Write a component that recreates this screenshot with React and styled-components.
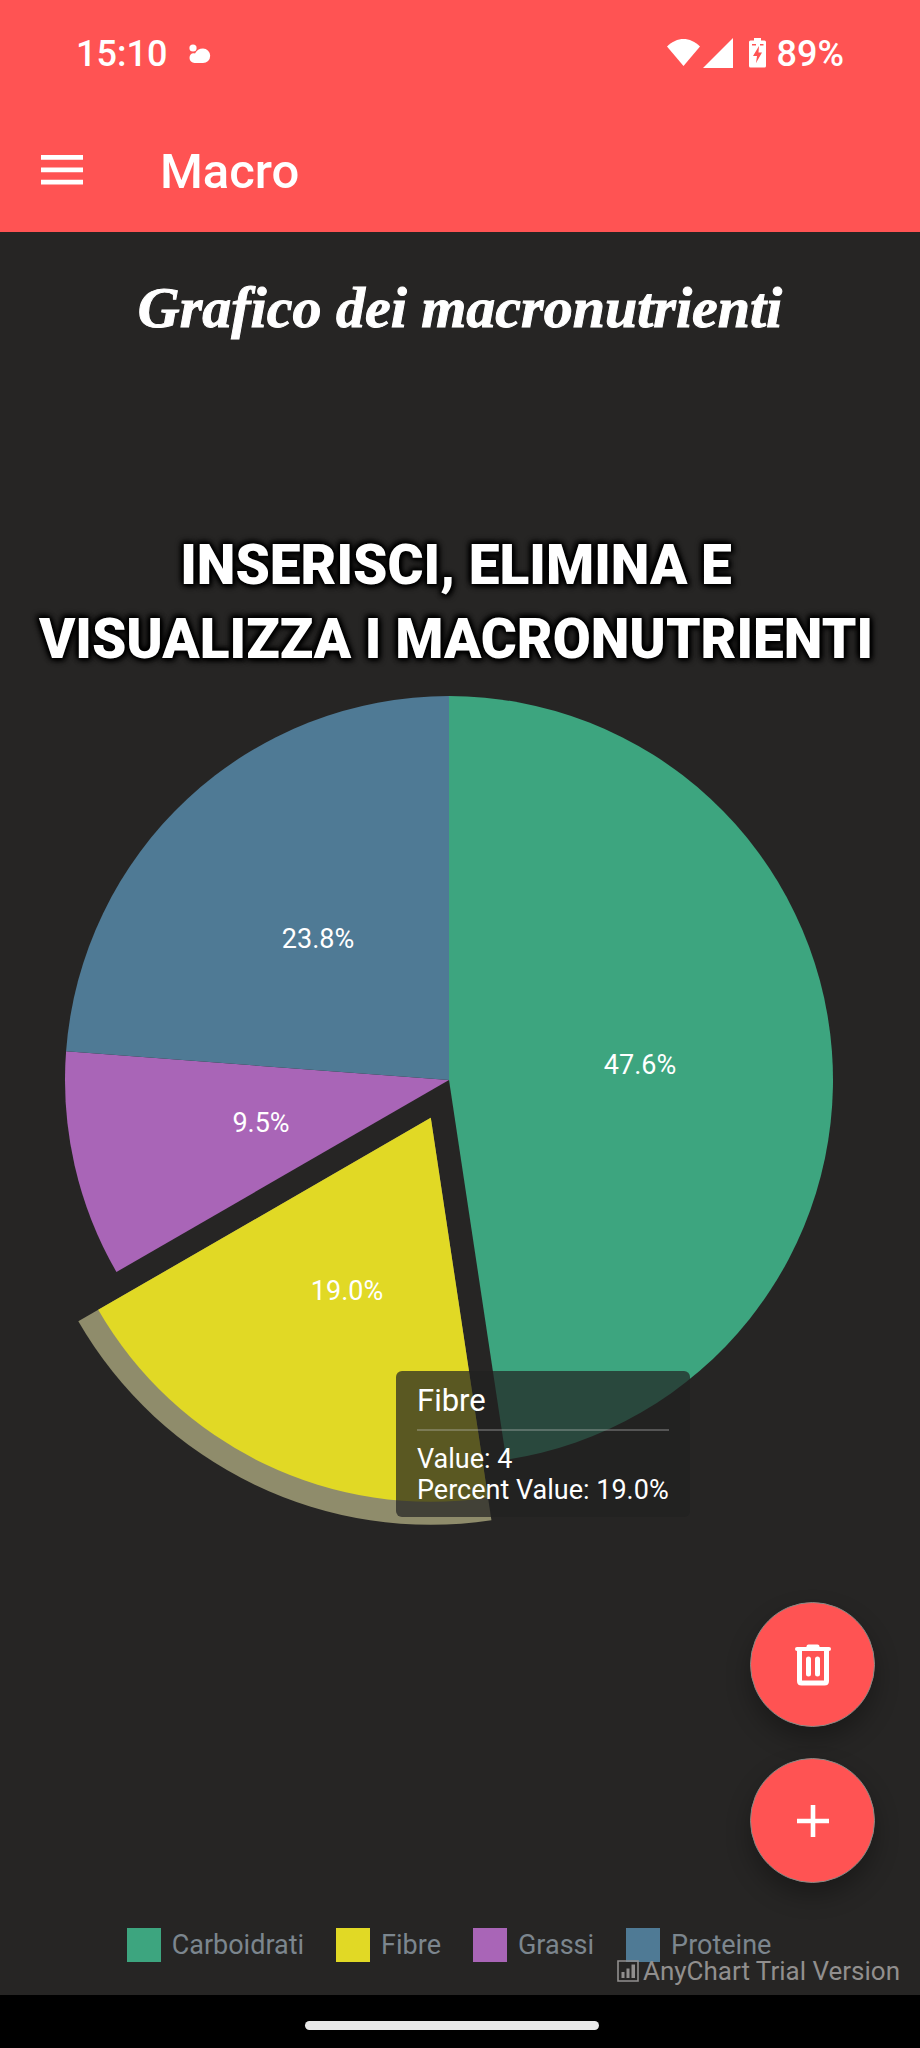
import React from "react";
import styled, { createGlobalStyle } from "styled-components";

const GlobalStyle = createGlobalStyle`
  * { box-sizing: border-box; }
  body {
    margin: 0;
    background: #262524;
    color: #ffffff;
    font-family: Roboto, "Liberation Sans", sans-serif;
  }
`;

const Screen = styled.div`
  display: flex;
  flex-direction: column;
  min-height: 100vh;
`;

const Header = styled.header`
  background: #ff5353;
`;

const StatusBar = styled.div`
  display: flex;
  align-items: center;
  justify-content: space-between;
  height: 108px;
  padding: 0 76px;
  font-size: 36px;
  line-height: 44px;
  font-weight: 500;
`;

const StatusGroup = styled.div`
  display: flex;
  align-items: center;
  gap: ${(p) => p.$gap}px;
`;

const Signals = styled.svg`
  display: block;
`;

const AppBar = styled.div`
  display: flex;
  align-items: center;
  gap: 74px;
  height: 124px;
  padding: 0 38px;
`;

const MenuButton = styled.button`
  display: grid;
  place-items: center;
  width: 48px;
  height: 48px;
  padding: 0;
  border: 0;
  background: none;
  color: inherit;
`;

const AppTitle = styled.h1`
  margin: 0;
  padding-top: 4px;
  font-size: 49px;
  line-height: 56px;
  font-weight: 500;
`;

const Main = styled.main`
  position: relative;
  flex: 1;
  display: flex;
  flex-direction: column;
`;

const ChartTitle = styled.h2`
  margin: 36px 0 0;
  font-family: "Liberation Serif", serif;
  font-style: italic;
  font-weight: 700;
  font-size: 58px;
  line-height: 80px;
  text-align: center;
  -webkit-text-stroke: 1px #ffffff;
`;

const Banner = styled.p`
  margin: 180px 8px 0 0;
  font-weight: 900;
  font-size: 55px;
  line-height: 74px;
  text-align: center;
  text-transform: uppercase;
  text-shadow: 0 0 4px #000, 0 0 5px #000, 0 0 6px #000, 2px 2px 6px #000, -2px -2px 6px #000;
`;

const BannerLine = styled.span`
  display: block;
`;

const Chart = styled.figure`
  position: relative;
  margin: 20px 22px 0 0;
`;

const Pie = styled.svg`
  display: block;
  width: 100%;
  height: auto;
`;

const SliceLabel = styled.text`
  fill: #ffffff;
  font-size: 27px;
  text-anchor: middle;
`;

const Tooltip = styled.div`
  position: absolute;
  left: 396px;
  top: 675px;
  padding: 12px 21px 11px;
  border-radius: 6px;
  background: rgba(33, 33, 33, 0.7);
  font-size: 27px;
  line-height: 31px;
  white-space: nowrap;
`;

const TooltipTitle = styled.div`
  padding-bottom: 10px;
  margin-bottom: 13px;
  border-bottom: 2px solid rgba(206, 206, 206, 0.3);
  font-size: 31px;
  line-height: 36px;
`;

const Actions = styled.div`
  display: flex;
  flex-direction: column;
  align-items: flex-end;
  gap: 31px;
  margin-top: 74px;
  padding-right: 45px;
`;

const ActionButton = styled.button`
  display: grid;
  place-items: center;
  width: 125px;
  height: 125px;
  padding: 0;
  border: 1px solid #8a8a86;
  border-radius: 50%;
  background: #ff5353;
  color: #ffffff;
  box-shadow: 0 12px 24px rgba(0, 0, 0, 0.3);
`;

const Legend = styled.ul`
  display: flex;
  justify-content: center;
  gap: 32px;
  margin: 45px 22px 32px 0;
  padding: 0;
  list-style: none;
`;

const LegendItem = styled.li`
  display: flex;
  align-items: center;
  gap: 11px;
  color: #7c868e;
  font-size: 27px;
  line-height: 26px;
`;

const Swatch = styled.span`
  width: 34px;
  height: 34px;
  background: ${(p) => p.$color};
`;

const Credit = styled.div`
  position: absolute;
  right: 20px;
  bottom: 11px;
  display: flex;
  align-items: center;
  gap: 4px;
  color: #918f8e;
  font-size: 26px;
  line-height: 26px;
`;

const GestureBar = styled.footer`
  display: flex;
  justify-content: center;
  align-items: center;
  height: 53px;
  padding-top: 8px;
  background: #000000;
`;

const Pill = styled.div`
  width: 32%;
  height: 9px;
  margin-right: 16px;
  border-radius: 5px;
  background: #e9e9e9;
`;

const CX = 449;
const CY = 384;
const R = 384;

const SLICES = [
  { name: "Carboidrati", value: 10, color: "#3da57f", label: [640, 378] },
  { name: "Fibre", value: 4, color: "#e1d925", label: [347, 604], exploded: true },
  { name: "Grassi", value: 2, color: "#a965b7", label: [261, 436] },
  { name: "Proteine", value: 5, color: "#4f7a95", label: [318, 252] },
];
const TOTAL = SLICES.reduce((sum, s) => sum + s.value, 0);

const point = (cx, cy, r, turn) => {
  const a = turn * 2 * Math.PI;
  return `${cx + r * Math.sin(a)} ${cy - r * Math.cos(a)}`;
};
const sector = (cx, cy, r, from, to) =>
  `M${cx} ${cy}L${point(cx, cy, r, from)}A${r} ${r} 0 0 1 ${point(cx, cy, r, to)}Z`;

function PieSlices() {
  let start = 0;
  return SLICES.map((s) => {
    const from = start;
    const to = from + s.value / TOTAL;
    start = to;
    const mid = (from + to) * Math.PI;
    const shift = s.exploded ? 42 : 0;
    const cx = CX + shift * Math.sin(mid);
    const cy = CY - shift * Math.cos(mid);
    return (
      <g key={s.name}>
        {s.exploded && <path d={sector(cx, cy, R + 23, from, to)} fill="#8f8c6b" />}
        <path d={sector(cx, cy, R, from, to)} fill={s.color} />
        <SliceLabel x={s.label[0]} y={s.label[1]}>
          {((s.value / TOTAL) * 100).toFixed(1)}%
        </SliceLabel>
      </g>
    );
  });
}

export default function App() {
  return (
    <Screen>
      <GlobalStyle />
      <Header>
        <StatusBar>
          <StatusGroup $gap={22}>
            <span>15:10</span>
            <svg width="22" height="20" viewBox="0 0 22 20" fill="#fff" aria-hidden="true">
              <circle cx="4" cy="4" r="3.6" />
              <path d="M5.5 19A5.2 5.2 0 0 1 .5 14C.5 10 3.4 8.6 6 9.6 7.400 6.500 10.400 4.600 14 4.600A7.200 7.200 0 0 1 14 19Z" />
            </svg>
          </StatusGroup>
          <StatusGroup $gap={10}>
            <Signals width="100" height="32" viewBox="0 0 100 32" fill="#fff" aria-hidden="true">
              <path d="M0 8.500C10 -1.500 23 -1.500 33 8.500L16.500 28Z" />
              <path d="M66 0V30H36Z" />
              <path
                fillRule="evenodd"
                d="M87 0H94V2.500H97.500Q99 2.500 99 4V28Q99 29.500 97.500 29.500H83.500Q82 29.500 82 28V4Q82 2.500 83.500 2.500H87ZM85 6V7.500H89V6ZM93 6V7.500H96.500V6ZM92 8L86 18H90L89 25L95 14.500H91.500Z"
              />
            </Signals>
            <span>89%</span>
          </StatusGroup>
        </StatusBar>
        <AppBar>
          <MenuButton type="button" aria-label="Menu">
            <svg width="42" height="30" viewBox="0 0 42 30" fill="currentColor" aria-hidden="true">
              <path d="M0 0H42V4.800H0ZM0 12.400H42V17.200H0ZM0 24.800H42V29.600H0Z" />
            </svg>
          </MenuButton>
          <AppTitle>Macro</AppTitle>
        </AppBar>
      </Header>

      <Main>
        <ChartTitle>Grafico dei macronutrienti</ChartTitle>
        <Banner>
          <BannerLine>Inserisci, elimina e</BannerLine>
          <BannerLine>visualizza i macronutrienti</BannerLine>
        </Banner>

        <Chart>
          <Pie viewBox="0 0 898 832" role="img" aria-label="Grafico dei macronutrienti">
            <PieSlices />
          </Pie>
          <Tooltip role="tooltip">
            <TooltipTitle>Fibre</TooltipTitle>
            <div>Value: 4</div>
            <div>Percent Value: 19.0%</div>
          </Tooltip>
        </Chart>

        <Actions>
          <ActionButton type="button" aria-label="Elimina">
            <svg width="36" height="42" viewBox="0 0 36 42" fill="none" stroke="currentColor" strokeLinecap="round" strokeLinejoin="round" aria-hidden="true">
              <path d="M2 5H34" strokeWidth="4" />
              <path d="M13.500 2.500H22.500" strokeWidth="4" />
              <path d="M4.500 6V37Q4.500 39 6.500 39H29.500Q31.500 39 31.500 37V6" strokeWidth="5" />
              <path d="M13.500 15V30M22.500 15V30" strokeWidth="5" />
            </svg>
          </ActionButton>
          <ActionButton type="button" aria-label="Aggiungi">
            <svg width="32" height="32" viewBox="0 0 32 32" stroke="currentColor" strokeWidth="4.600" aria-hidden="true">
              <path d="M16 0V32M0 16H32" />
            </svg>
          </ActionButton>
        </Actions>

        <Legend>
          {SLICES.map((s) => (
            <LegendItem key={s.name}>
              <Swatch $color={s.color} />
              {s.name}
            </LegendItem>
          ))}
        </Legend>

        <Credit>
          <svg width="22" height="22" viewBox="0 0 22 22" fill="currentColor" aria-hidden="true">
            <path d="M1 1H21V21H1Z" fill="none" stroke="currentColor" strokeWidth="1.600" />
            <path d="M4.500 12H7.500V18H4.500ZM9.500 8.500H12.500V18H9.500ZM14.500 4.500H18V18H14.500Z" />
          </svg>
          <span>AnyChart Trial Version</span>
        </Credit>
      </Main>

      <GestureBar>
        <Pill />
      </GestureBar>
    </Screen>
  );
}
